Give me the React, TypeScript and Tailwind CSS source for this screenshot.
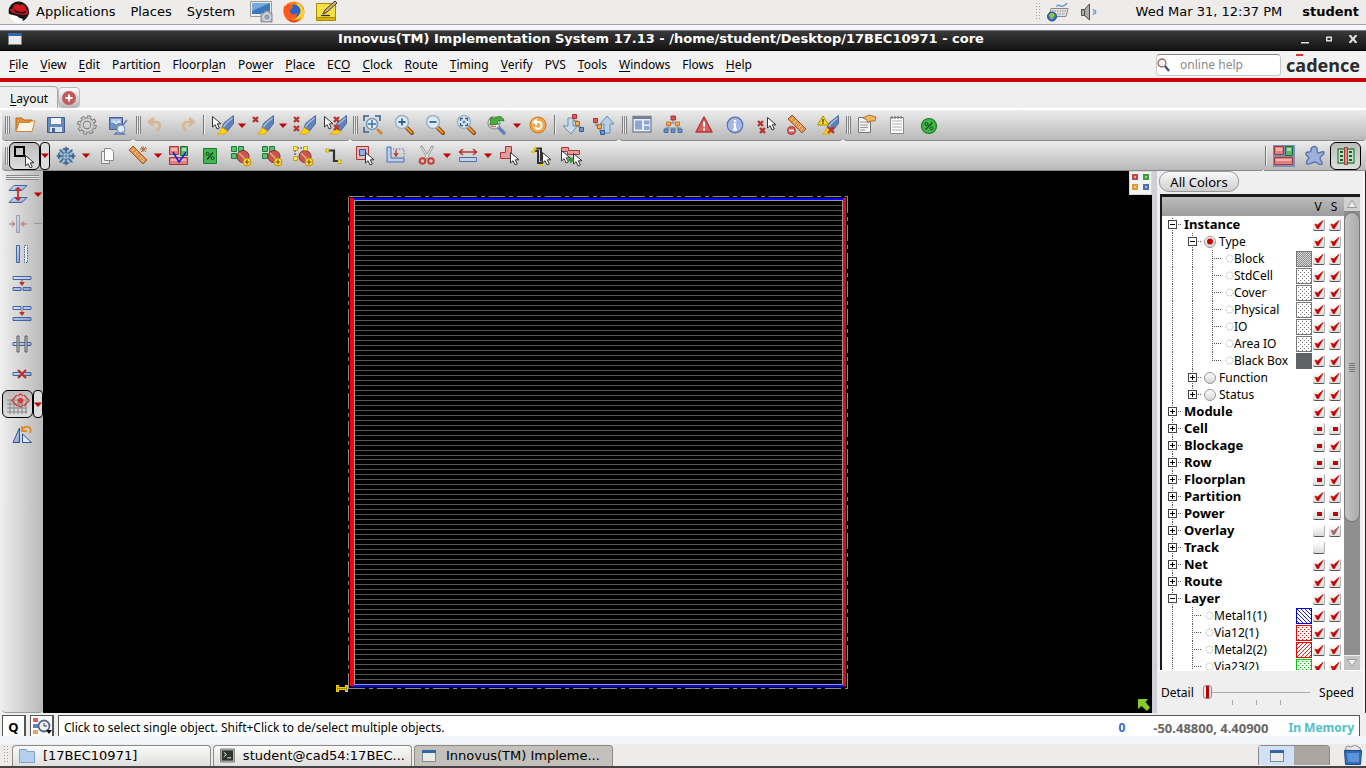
import React from "react";

type Kids = { children?: React.ReactNode };

/* ---------- drawing motifs ---------- */

const Ico = ({ children }: Kids) => (
  <svg width="24" height="24" viewBox="0 0 24 24" className="shrink-0" aria-hidden="true">
    {children}
  </svg>
);

const Cursor = ({ x = 0, y = 0 }: { x?: number; y?: number }) => (
  <path
    transform={`translate(${x} ${y})`}
    d="M.5 .5V11l2.600-2.300 2 4.300 2.200-1-2-4.200H9z"
    fill="#fff"
    stroke="#333"
    strokeWidth="1"
  />
);

const Cross = ({ x, y, s = 5 }: { x: number; y: number; s?: number }) => (
  <path
    transform={`translate(${x} ${y})`}
    d={`M0 0L${s} ${s}M${s} 0L0 ${s}`}
    stroke="#b5362f"
    strokeWidth="2.400"
    fill="none"
  />
);

const Brush = ({ x = 0, y = 0 }: { x?: number; y?: number }) => (
  <g transform={`translate(${x} ${y})`}>
    <path d="M15.500 -1.500V6.500L9.500 14 4 10.500 6 6z" fill="#5f83b8" stroke="#3d5a8a" strokeWidth=".8" />
    <path d="M14.500 1L8 6.500 5.500 10" stroke="#a9c0e2" strokeWidth="1.400" fill="none" />
    <path d="M4 10.500l5.500 3.500L7 17H-.5c2-1 3-3 4.500-6.500z" fill="#ffd800" stroke="#d99a00" strokeWidth=".7" />
  </g>
);

const Lens = ({ children }: Kids) => (
  <>
    <path d="M14 14l6 6" stroke="#8a4a12" strokeWidth="4" strokeLinecap="round" />
    <path d="M14.500 14.500l5 5" stroke="#f0982e" strokeWidth="2" strokeLinecap="round" />
    <circle cx="10" cy="9" r="6.500" fill="#dceaf5" stroke="#9fb2c2" strokeWidth="1.500" />
    {children}
  </>
);

const PlusBadge = () => (
  <>
    <circle cx="18" cy="18" r="4" fill="#ffe04a" stroke="#c78b00" />
    <path d="M18 15.500v5M15.500 18h5" stroke="#7a5200" strokeWidth="1.200" />
  </>
);

const Stop = () => (
  <>
    <circle cx="14" cy="12.500" r="6" fill="#c9584a" stroke="#8f2c25" />
    <path d="M10 9l8 8" stroke="#f0a59c" strokeWidth="1.500" />
  </>
);

const GreenQuad = () => (
  <g fill="#5cc070" stroke="#1f7a36">
    <path d="M2.500 2.500h5v5h-5zM9.500 2.500h5v5h-5zM2.500 9.500h5v5h-5zM9.500 9.500h5v5h-5z" />
  </g>
);

const Ruler = () => (
  <>
    <path d="M7 2l14 14-4 4L3 6z" fill="#e0924f" stroke="#a85a1d" />
    <path d="M8 5l-2 2M11 7l-2 3M13 10l-2 2M16 12l-2 3M18 15l-2 2" stroke="#fbd9b4" />
  </>
);

const Tiles = () => (
  <>
    <path d="M2.500 2.500h9v8h-9zM2.500 13.500h18v7h-18z" fill="#e2807f" stroke="#a33a3a" />
    <path d="M4 4h6v3H4zM4 15h15v2H4z" fill="#f1b3b0" />
    <path d="M13.500 2.500h7v9h-7z" fill="#5cb26c" stroke="#1f6b33" />
    <path d="M15 4h4v3h-4z" fill="#a9dcb2" />
  </>
);

const G = "url(#blueGrad)";

const icons: Record<string, React.ReactNode> = {
  open: (
    <>
      <path d="M3 18V5h6l2 2h8v4" fill="#e5913c" stroke="#b56618" />
      <path d="M3 18.500l3-9h11l1-1.500h4l-3 10.500z" fill="#fdf3e4" stroke="#c98544" />
    </>
  ),
  save: (
    <>
      <path d="M3.500 4.500h17v15h-17z" fill="#6688bd" stroke="#3e5c90" />
      <path d="M7 5h10v6H7z" fill="#f2f5fa" />
      <path d="M6 14h12v5H6z" fill="#dce2ea" />
      <path d="M8 15h3v4H8z" fill="#4a6694" />
    </>
  ),
  gear: (
    <>
      <circle cx="12" cy="12" r="8" fill="none" stroke="#777" strokeWidth="3.600" strokeDasharray="3.600 2.683" />
      <circle cx="12" cy="12" r="5.500" fill="none" stroke="#777" strokeWidth="4.400" />
      <circle cx="12" cy="12" r="5.500" fill="none" stroke="#cfcfcf" strokeWidth="2.600" />
      <circle cx="12" cy="12" r="7.800" fill="none" stroke="#cfcfcf" strokeWidth="2" strokeDasharray="2.200 3.926" strokeDashoffset="-.7" />
    </>
  ),
  prefs: (
    <>
      <path d="M3.500 4.500h13v12h-13z" fill="#6f91c4" stroke="#45659a" />
      <path d="M5 6h10v4H5z" fill="#b7cbe8" />
      <path d="M7 8l3 3 4-3" stroke="#fff" fill="none" />
      <circle cx="15" cy="16" r="4" fill="#dbe9f7" stroke="#6f8dae" />
      <path d="M17 12l4-5M11 19l-2 2h9l-2-2" stroke="#5f7fae" strokeWidth="1.500" fill="none" />
    </>
  ),
  undo: <path d="M10 5L5 9l5 4M6 9h6c5 0 5 6 0 9" fill="none" stroke="#d9b694" strokeWidth="2.600" />,
  redo: <path d="M14 5l5 4-5 4M18 9h-6c-5 0-5 6 0 9" fill="none" stroke="#d9b694" strokeWidth="2.600" />,
  brushSel: (
    <>
      <Brush x={8} y={4} />
      <Cursor x={2} y={3} />
    </>
  ),
  brushX: (
    <>
      <Brush x={7} y={4} />
      <Cross x={2} y={4} />
    </>
  ),
  brushXX: (
    <>
      <Brush x={8} y={4} />
      <Cross x={2} y={4} />
      <Cross x={2} y={13} />
    </>
  ),
  brushCurX: (
    <>
      <Brush x={8} y={4} />
      <Cursor x={1} y={3} />
      <Cross x={11} y={4} />
      <Cross x={11} y={12} />
    </>
  ),
  zoomFit: (
    <>
      <path d="M3 8V3h5M14 3h5v5M3 14v5h5" stroke="#5a7da0" strokeWidth="2" fill="none" />
      <circle cx="11" cy="11" r="5.500" fill="#e3eef7" stroke="#6f93b5" strokeWidth="1.400" />
      <path d="M11 7v8M7 11h8" stroke="#3f6f9f" strokeWidth="1.500" />
      <path d="M16 16l5 5" stroke="#d08434" strokeWidth="2.600" />
    </>
  ),
  zoomIn: (
    <Lens>
      <path d="M10 5.500v7M6.500 9h7" stroke="#39638f" strokeWidth="1.800" />
    </Lens>
  ),
  zoomOut: (
    <Lens>
      <path d="M6.500 9h7" stroke="#39638f" strokeWidth="1.800" />
    </Lens>
  ),
  zoomSel: (
    <Lens>
      <path d="M6.500 8V5.500H9M11 5.500h2.500V8M13.500 10v2.500H11M9 12.500H6.500V10" stroke="#39638f" strokeWidth="1.300" fill="none" />
      <path d="M10 7.500v3M8.500 9h3" stroke="#39638f" />
    </Lens>
  ),
  zoomPrev: (
    <>
      <path d="M13 14l6 6" stroke="#5f80b8" strokeWidth="3.400" strokeLinecap="round" />
      <circle cx="9" cy="10" r="6" fill="#e7eef4" stroke="#999" strokeWidth="1.400" />
      <path d="M5 12l1-8 3 2c4-4 9-3 10 2-3-1-5-1-7 1l2 2z" fill="#4caf3a" stroke="#25701b" strokeWidth=".8" />
      <path d="M6 13.500h5" stroke="#d66" strokeWidth="1.500" />
    </>
  ),
  refresh: (
    <>
      <circle cx="12" cy="12" r="8" fill="#f3a94b" stroke="#c9761b" />
      <path d="M9 9h4a3.500 3.500 0 1 1-4 5" fill="none" stroke="#fff" strokeWidth="2.200" />
      <path d="M11 5v8L6 9z" fill="#fff" />
    </>
  ),
  hierDown: (
    <>
      <path d="M7 5h5v8h4l-6 8-8-8h5z" fill="#c9dbea" stroke="#6e90ae" />
      <path d="M13 4v4h4v6h3" stroke="#777" fill="none" />
      <path d="M11.500 1.500h4v4h-4z" fill="#e05a5a" stroke="#a33" />
      <path d="M14.500 8.500h4v4h-4z" fill="#f3b05c" stroke="#b56618" />
      <path d="M18.500 14.500h4v4h-4z" fill="#6d93c8" stroke="#345f96" />
    </>
  ),
  hierUp: (
    <>
      <path d="M12 20v-9H8l7-8 7 8h-4v9z" fill="#b9d0e4" stroke="#6e90ae" />
      <path d="M4 8v5h4v6h3" stroke="#777" fill="none" />
      <path d="M1.500 5.500h4v4h-4z" fill="#e05a5a" stroke="#a33" />
      <path d="M5.500 11.500h4v4h-4z" fill="#f3b05c" stroke="#b56618" />
      <path d="M8.500 17.500h4v4h-4z" fill="#6d93c8" stroke="#345f96" />
    </>
  ),
  panels: (
    <>
      <path d="M3 3.500h18v15.500H3z" fill="#e9edf5" stroke="#7d8796" strokeWidth="1.400" />
      <path d="M3 3h18v3H3z" fill="#76808f" />
      <path d="M5 7.500h7v9H5zM14 7.500h5.500v4H14zM14 13h5.500v4H14z" fill="#8ba6d8" />
    </>
  ),
  orgTree: (
    <>
      <path d="M12 6v4M7 10h10M7 10v8M17 10v8M4 15h16" stroke="#888" fill="none" />
      <path d="M10 3h4.500v4H10z" fill="#d9534f" stroke="#922" strokeWidth=".8" />
      <path d="M5.500 9h4v3.500h-4zM14.500 9h4v3.500h-4z" fill="#f3b05c" stroke="#b56618" strokeWidth=".8" />
      <path d="M3 16h4v3.500H3zM10 16h4v3.500h-4zM17 16h4v3.500h-4z" fill="#6d93c8" stroke="#345f96" strokeWidth=".8" />
    </>
  ),
  warn: (
    <>
      <path d="M12 4l8 15H4z" fill="#d9605c" stroke="#b23a37" strokeWidth="1.500" strokeLinejoin="round" />
      <path d="M12 8.500v5.500M12 15.500v2" stroke="#fff" strokeWidth="2" />
    </>
  ),
  info: (
    <>
      <circle cx="12" cy="12" r="7.800" fill="#a8b8e6" stroke="#5b70b0" strokeWidth="1.200" />
      <path d="M12 7v2M10.500 11H12v5M10 16.500h4" stroke="#fff" strokeWidth="2.200" fill="none" />
    </>
  ),
  curXX: (
    <>
      <Cross x={4} y={8} />
      <Cross x={6} y={15} />
      <Cursor x={13} y={4} />
    </>
  ),
  rulerDel: (
    <>
      <Ruler />
      <circle cx="6.500" cy="17.500" r="4" fill="#d9605c" stroke="#a5332f" />
      <path d="M4 17.500h5" stroke="#fff" strokeWidth="1.600" />
    </>
  ),
  warnBrush: (
    <>
      <Brush x={7} y={4} />
      <path d="M7 3l5.500 9h-11z" fill="#ffe100" stroke="#b08800" />
      <path d="M7 6v3.500M7 10v1" stroke="#333" strokeWidth="1.300" />
      <Cross x={12} y={14} s={6} />
    </>
  ),
  report: (
    <>
      <path d="M4.500 4.500h12v15h-12z" fill="#f2f2f2" stroke="#777" />
      <path d="M6 9h8M6 12h8M6 14.500h8M6 17h5" stroke="#999" />
      <path d="M9 5l6-3 7 2-1 4h-5l-2 2-1-3z" fill="#f0b866" stroke="#a86c1e" strokeWidth=".9" />
    </>
  ),
  notepad: (
    <>
      <path d="M5.500 4.500h13v16h-13z" fill="#fff" stroke="#888" />
      <path d="M7 8h10M7 11h10M7 14h10M7 17h10" stroke="#aaa" />
      <path d="M7 3v3M10 3v3M13 3v3M16 3v3" stroke="#666" />
    </>
  ),
  percentBall: (
    <>
      <circle cx="13" cy="13" r="7.500" fill="#42b549" stroke="#1e7a28" strokeWidth="1.200" />
      <path d="M16.500 9.500l-7 7" stroke="#0e4d17" strokeWidth="1.400" />
      <circle cx="10.500" cy="11" r="1.500" fill="none" stroke="#0e4d17" />
      <circle cx="15.500" cy="15.500" r="1.500" fill="none" stroke="#0e4d17" />
    </>
  ),
  select: (
    <>
      <path d="M2 3h9v9H2z" fill="none" stroke="#000" strokeWidth="2" />
      <Cursor x={12} y={11} />
    </>
  ),
  snow: (
    <>
      <circle cx="12" cy="12" r="7.500" fill="#9dbbd6" stroke="#54789c" strokeWidth="1" strokeDasharray="3 2" />
      <path
        d="M12 2.500v19M2.500 12h19M5.500 5.500l13 13M18.500 5.500l-13 13M9.500 4L12 6.500 14.500 4M9.500 20l2.500-2.500 2.500 2.500M4 9.500L6.500 12 4 14.500M20 9.500L17.500 12l2.500 2.500"
        stroke="#3f6488"
        strokeWidth="1.300"
        fill="none"
      />
      <circle cx="12" cy="12" r="3.500" fill="#c3d8ea" stroke="#4d7398" />
      <path d="M12 9v6M9 12h6" stroke="#4d7398" />
    </>
  ),
  copy: (
    <>
      <path d="M6.500 7.500h8v12h-8z" fill="#eee" stroke="#888" />
      <path d="M9.500 4.500h6l3 3v9h-9z" fill="#fafafa" stroke="#888" />
    </>
  ),
  ruler: (
    <>
      <Ruler />
      <path d="M17 2v6M14 5h7M15 3l5 5M20 3l-5 5" stroke="#a85a1d" strokeWidth=".9" />
    </>
  ),
  tilesV: (
    <>
      <Tiles />
      <path d="M6 8l6 10 7-10" fill="none" stroke="#1420d8" strokeWidth="1.500" />
    </>
  ),
  percent: (
    <>
      <path d="M5.500 4.500h13v15h-13z" fill="#45b554" stroke="#1f7a2c" />
      <path d="M15 8.500l-6 7" stroke="#0c4415" strokeWidth="1.300" />
      <circle cx="9.500" cy="9.800" r="1.500" fill="none" stroke="#0c4415" />
      <circle cx="14.500" cy="14.200" r="1.500" fill="none" stroke="#0c4415" />
    </>
  ),
  blockAdd: (
    <>
      <GreenQuad />
      <Stop />
      <PlusBadge />
    </>
  ),
  nodeAdd: (
    <>
      <path d="M4 14V4h10" fill="none" stroke="#333" strokeDasharray="2 1" />
      <Stop />
      <path d="M2.500 2.500h4v4h-4zM12.500 2.500h4v4h-4zM2.500 12.500h4v4h-4z" fill="#ffe94a" stroke="#a89400" strokeWidth=".7" />
      <PlusBadge />
    </>
  ),
  wire: (
    <>
      <path d="M5 6.500h7V17h6" fill="none" stroke="#333" strokeWidth="2.200" />
      <path d="M4 5h3v3H4zM16 16h3v3.500h-3z" fill="#ffe94a" stroke="#a89400" strokeWidth=".7" />
    </>
  ),
  boxCursor: (
    <>
      <path d="M3.500 2.500h12v13h-12z" fill="#efb6b4" stroke="#a33a3a" />
      <path d="M6.500 5.500h6v6h-6z" fill="#8fb0e0" stroke="#2e5596" />
      <Cursor x={12} y={8} />
    </>
  ),
  shapeL: (
    <>
      <path d="M3 3v15h17v-4H7V3z" fill="#b9cdec" stroke="#4d6fa6" />
      <path d="M9 5h11v8" fill="none" stroke="#4d6fa6" strokeDasharray="1.500 1.500" />
      <path d="M12 6v5M10 9l2 3 2-3" stroke="#b5362f" strokeWidth="1.300" fill="none" />
    </>
  ),
  cut: (
    <>
      <path d="M6 2l8 13M18 2l-8 13" stroke="#9a9a9a" strokeWidth="2.600" />
      <path d="M6.500 3l7 11M17.500 3l-7 11" stroke="#f1f1f1" strokeWidth="1" />
      <circle cx="7.500" cy="17" r="2.800" fill="none" stroke="#c8402f" strokeWidth="2" />
      <circle cx="16" cy="17" r="2.800" fill="none" stroke="#c8402f" strokeWidth="2" />
    </>
  ),
  stretch: (
    <>
      <path d="M4 8h16M7 5L3.500 8 7 11M17 5l3.500 3-3.500 3" stroke="#b5362f" strokeWidth="1.500" fill="none" />
      <path d="M3.500 13.500h17v4h-17z" fill="#c1d2ee" stroke="#4d6fa6" />
    </>
  ),
  polyCursor: (
    <>
      <path d="M8.500 2.500h6v12h-11v-6h5z" fill="#e79a96" stroke="#a33a3a" />
      <Cursor x={13} y={8} />
    </>
  ),
  wireCursor: (
    <>
      <path d="M6 7h4v12h5M8 4.500h5v12h3" fill="none" stroke="#333" strokeWidth="2" />
      <path d="M3 8h4M8 3l-2 4" stroke="#e2c600" strokeWidth="2.200" fill="none" />
      <path d="M11 21h4" stroke="#e2c600" strokeWidth="2" />
      <Cursor x={14} y={8} />
    </>
  ),
  swapCursor: (
    <>
      <path d="M2.500 3.500h7v3h11v4h-12v-3h-6z" fill="#e79a96" stroke="#a33a3a" />
      <Cursor x={2} y={6} />
      <Cursor x={14} y={9} />
      <path d="M8 16h5M11 13.500l3 2.500-3 2.500" stroke="#2e9b2e" strokeWidth="1.800" fill="none" />
    </>
  ),
  tiles: (
    <>
      <path d="M1 1h22v22H1z" fill="#7a8fb8" />
      <Tiles />
    </>
  ),
  amoeba: (
    <path
      d="M8 7c-1-4 4-6 6-3 1 2-1 4 1 5 2 0 4-2 6-1 1 3-3 3-4 6 0 3 3 4 2 6-3 2-4-2-7-2-3 0-5 3-8 2-2-2 1-4 2-6 0-2-4-2-3-5 2-2 4 0 5-2z"
      fill="#9db1dc"
      stroke="#5672ab"
      strokeWidth="1.300"
    />
  ),
  chip: (
    <>
      <path d="M4 5h7v14H4zM13 5h7v14h-7z" fill="#bfe3c4" stroke="#2f8a43" strokeWidth="1.300" />
      <path d="M6 8h3M6 12h3M6 16h3M15 8h3M15 12h3M15 16h3" stroke="#1f5c30" strokeWidth="2" />
      <path d="M10.500 3.500h3v17h-3z" fill="#e98c84" stroke="#a33a3a" />
    </>
  ),
  layers: (
    <>
      <path d="M8 3.500h13l-5 5H3z" fill={G} stroke="#4562a0" />
      <path d="M8 15.500h13l-5 5H3z" fill={G} stroke="#4562a0" />
      <path d="M12 6v12M9.500 8.500L12 6l2.500 2.500M9.500 15.500L12 18l2.500-2.500" stroke="#c0302b" strokeWidth="1.800" fill="none" />
    </>
  ),
  align: (
    <g opacity=".45">
      <path d="M10.500 3.500h3v17h-3z" fill={G} stroke="#4562a0" />
      <path d="M3 12h5M6 9.500L8.500 12 6 14.500M21 12h-5M18 9.500L15.500 12l2.500 2.500" stroke="#b5362f" strokeWidth="1.500" fill="none" />
    </g>
  ),
  columns: (
    <>
      <path d="M6.500 3.500h3v17h-3z" fill={G} stroke="#4562a0" />
      <path d="M14.500 3.500h3v17h-3z" fill="#eef2fa" stroke="#4562a0" strokeDasharray="1.500 1" />
    </>
  ),
  rowDown: (
    <>
      <path d="M3 4.500h18v3H3zM3 15.500h8v3H3zM13 15.500h8v3h-8z" fill={G} stroke="#4562a0" />
      <path d="M12 8v4M9.800 10.500h4.400L12 13.500z" stroke="#b5362f" fill="#b5362f" />
    </>
  ),
  rowMerge: (
    <>
      <path d="M3 4.500h8v3H3zM13 4.500h8v3h-8zM3 15.500h18v3H3z" fill={G} stroke="#4562a0" />
      <path d="M12 8v4M9.800 10.500h4.400L12 13.500z" stroke="#b5362f" fill="#b5362f" />
    </>
  ),
  fence: (
    <>
      <path d="M3 10.500h18v3H3z" fill={G} stroke="#4562a0" />
      <path d="M7 4h2v16H7zM15 4h2v16h-2z" fill="#d6d6d6" stroke="#555" />
    </>
  ),
  rowCut: (
    <>
      <path d="M3 10.500h18v3H3z" fill={G} stroke="#4562a0" />
      <Cross x={8} y={8} s={8} />
    </>
  ),
  gridPick: (
    <>
      <path d="M4 8v14M8 8v14M12 8v14M16 8v14M20 8v14M1 8h20M1 12h20M1 16h20M1 20h20" stroke="#888" />
      <path d="M11 3L6 8.500l5 5.500M18 3l5 5.500-5 5.500M12 4l2.500-2L17 4M12 13l2.500 2 2.500-2" stroke="#c94b46" strokeWidth="1.600" fill="none" />
      <circle cx="14.500" cy="8.500" r="2.800" fill="#dc3c38" />
    </>
  ),
  mirror: (
    <>
      <path d="M3 20.500L9.500 6v14.500z" fill={G} stroke="#33508e" />
      <path d="M12.500 20.500V12l9 8.500z" fill="#dfe8f6" stroke="#33508e" />
      <path d="M13 7l2-2c4-1 7 1 5 6M12 4v5h5" fill="none" stroke="#e08d2c" strokeWidth="2" />
    </>
  ),
};

/* ---------- toolbar parts ---------- */

type Item = string;

const Tool = ({ name, pressed = false }: { name: string; pressed?: boolean }) => (
  <button
    type="button"
    aria-label={name}
    className={
      pressed
        ? "flex h-7 w-[31px] shrink-0 items-center justify-center rounded-md border border-black bg-gradient-to-b from-[#bdbdbd] to-[#dedede]"
        : "flex h-7 w-[31px] shrink-0 items-center justify-center"
    }
  >
    <Ico>{icons[name]}</Ico>
  </button>
);

const Drop = ({ pressed = false, faded = false }: { pressed?: boolean; faded?: boolean }) => (
  <button
    type="button"
    aria-label="More"
    className={
      pressed
        ? "flex h-7 w-[10px] shrink-0 items-center justify-center rounded-[4px] border border-black bg-[#dcdcdc]"
        : "flex h-7 w-[10px] shrink-0 items-center justify-center"
    }
  >
    <svg width="8" height="5" viewBox="0 0 8 5" className="shrink-0" aria-hidden="true">
      {faded ? <path d="M0 1.500h8" stroke="#999" /> : <path d="M0 .5h8L4 5z" fill="#c00000" />}
    </svg>
  </button>
);

const renderItem = (it: Item, i: number) => {
  if (it === "|") return <span key={i} className="mx-px h-5 w-[2px] shrink-0 border-l border-[#777] bg-[#eee]" />;
  if (it === "v") return <Drop key={i} />;
  if (it === "V") return <Drop key={i} pressed />;
  if (it.startsWith("!")) return <Tool key={i} name={it.slice(1)} pressed />;
  return <Tool key={i} name={it} />;
};

const Group = ({ items, grow = false }: { items: Item[]; grow?: boolean }) => (
  <div
    className={
      grow
        ? "flex flex-1 items-center rounded-b-sm border-b border-[#8a8a8a] bg-gradient-to-b from-[#ececec] to-[#b9b9b9]"
        : "flex items-center rounded-b-sm border-b border-[#8a8a8a] bg-gradient-to-b from-[#ececec] to-[#b9b9b9]"
    }
  >
    <span className="flex h-[18px] w-[7px] shrink-0 items-center pl-[3px]">
      <span className="h-[18px] w-[5px] shrink-0 border-x border-[#808080] bg-[linear-gradient(90deg,#e8e8e8_1px,#888_1px,#888_2px,#e8e8e8_2px)]" />
    </span>
    {items.map(renderItem)}
  </div>
);

/* ---------- menu ---------- */

const menus: [string, number][] = [
  ["File", 0], ["View", 0], ["Edit", 0], ["Partition", 8], ["Floorplan", 7], ["Power", 2], ["Place", 0],
  ["ECO", 2], ["Clock", 0], ["Route", 0], ["Timing", 0], ["Verify", 0], ["PVS", -1], ["Tools", 0],
  ["Windows", 0], ["Flows", -1], ["Help", 0],
];

const Mnemonic = ({ text, at }: { text: string; at: number }) =>
  at < 0 ? (
    <>{text}</>
  ) : (
    <>
      {text.slice(0, at)}
      <u className="underline-offset-2">{text[at]}</u>
      {text.slice(at + 1)}
    </>
  );

/* ---------- layer tree ---------- */

type Mark = "on" | "part" | "off" | "dim" | "none";
type Row = {
  name: string;
  level: 0 | 1 | 2;
  fold?: "+" | "-";
  radio?: "on" | "off" | "tiny";
  swatch?: string;
  v: Mark;
  s: Mark;
  rails: string;
};

/* rails: one letter per tree column; I = through line, L = last corner, T = branch */
const rows: Row[] = [
  { name: "Instance", level: 0, fold: "-", v: "on", s: "on", rails: "" },
  { name: "Type", level: 1, fold: "-", radio: "on", v: "on", s: "on", rails: "I" },
  ...["Block", "StdCell", "Cover", "Physical", "IO", "Area IO", "Black Box"].map((name, i): Row => ({
    name,
    level: 2,
    radio: "tiny",
    swatch: i === 0 ? "dense" : i === 6 ? "solid" : "dots",
    v: "on",
    s: "on",
    rails: i === 6 ? "IIL" : "IIT",
  })),
  { name: "Function", level: 1, fold: "+", radio: "off", v: "on", s: "on", rails: "I" },
  { name: "Status", level: 1, fold: "+", radio: "off", v: "on", s: "on", rails: "I" },
  ...(
    [
      ["Module", "on", "on"],
      ["Cell", "part", "part"],
      ["Blockage", "part", "on"],
      ["Row", "part", "part"],
      ["Floorplan", "part", "on"],
      ["Partition", "on", "on"],
      ["Power", "part", "part"],
      ["Overlay", "off", "dim"],
      ["Track", "off", "none"],
      ["Net", "on", "on"],
      ["Route", "on", "on"],
    ] as [string, Mark, Mark][]
  ).map(([name, v, s]): Row => ({ name, level: 0, fold: "+", v, s, rails: "" })),
  { name: "Layer", level: 0, fold: "-", v: "on", s: "on", rails: "" },
  { name: "Metal1(1)", level: 1, radio: "tiny", swatch: "blue", v: "on", s: "on", rails: "IT" },
  { name: "Via12(1)", level: 1, radio: "tiny", swatch: "redDots", v: "on", s: "on", rails: "IT" },
  { name: "Metal2(2)", level: 1, radio: "tiny", swatch: "red", v: "on", s: "on", rails: "IT" },
  { name: "Via23(2)", level: 1, radio: "tiny", swatch: "greenDots", v: "on", s: "on", rails: "IT" },
];

const Rails = ({ row, first }: { row: Row; first: boolean }) => {
  const w = 20 * row.level + 20;
  const cx = 20 * row.level + 10.5;
  const dash = { stroke: "#555", strokeDasharray: "1 1", fill: "none" };
  return (
    <svg width={w} height="17" viewBox={`0 0 ${w} 17`} className="shrink-0" aria-hidden="true">
      {row.rails.split("").map((r, i) => {
        const x = 20 * i + 10.5;
        if (r === "I") return <path key={i} d={`M${x} 0V17`} {...dash} />;
        return <path key={i} d={`M${x} 0V${r === "L" ? 9 : 17}M${x + 1.5} 8.500h8`} {...dash} />;
      })}
      {row.fold && (
        <>
          <path d={`M${cx} ${first ? 2 : 0}V${row.level === 1 && row.name === "Status" ? 9 : 17}M${cx + 5.5} 8.500h4`} {...dash} />
          <rect x={cx - 4} y="4.500" width="8" height="8" fill="#fff" stroke="#444" />
          <path d={`M${cx - 2.5} 8.500h5${row.fold === "+" ? `M${cx} 6v5` : ""}`} stroke="#000" />
        </>
      )}
    </svg>
  );
};

const Radio = ({ kind }: { kind: "on" | "off" | "tiny" }) =>
  kind === "tiny" ? (
    <svg width="9" height="9" viewBox="0 0 9 9" className="shrink-0" aria-hidden="true">
      <circle cx="4.500" cy="4.500" r="3.500" fill="#fff" stroke="#bbb" strokeDasharray="2 1" />
    </svg>
  ) : (
    <svg width="14" height="14" viewBox="0 0 14 14" className="ml-px shrink-0" aria-hidden="true">
      <circle cx="7" cy="7" r="5.500" fill="url(#ballGrad)" stroke="#999" />
      {kind === "on" && <circle cx="7" cy="6.500" r="3" fill="#c80000" />}
    </svg>
  );

const Swatch = ({ kind }: { kind: string }) => {
  const fills: Record<string, [string, string]> = {
    dense: ["url(#pDense)", "#777"],
    dots: ["url(#pDots)", "#777"],
    solid: ["#5f6363", "#5f6363"],
    blue: ["url(#pBlue)", "#0000d8"],
    redDots: ["url(#pRedDots)", "#f00000"],
    red: ["url(#pRed)", "#f00000"],
    greenDots: ["url(#pGreenDots)", "#00c800"],
  };
  const [fill, stroke] = fills[kind];
  return (
    <svg width="16" height="16" viewBox="0 0 16 16" className="block" aria-hidden="true">
      <rect x=".5" y=".5" width="15" height="15" fill={fill} stroke={stroke} />
    </svg>
  );
};

const Tick = ({ mark, label }: { mark: Mark; label: string }) => {
  if (mark === "none") return null;
  const ink = mark === "on" ? "#c80000" : "#a86464";
  return (
    <span className="grid size-3">
      <input
        type="checkbox"
        aria-label={label}
        defaultChecked={mark === "on" || mark === "dim"}
        className="col-start-1 row-start-1 size-3 appearance-none rounded-[2px] border-r border-b border-r-[#b0b0b0] border-b-[#555] bg-gradient-to-b from-white to-[#dcdcdc]"
      />
      <svg width="12" height="12" viewBox="0 0 12 12" className="pointer-events-none col-start-1 row-start-1" aria-hidden="true">
        {(mark === "on" || mark === "dim") && (
          <path d="M2 5l2.500 1L10 1.500 5.500 9.500H4z" fill={ink} stroke={ink} strokeWidth=".7" />
        )}
        {mark === "part" && <rect x="4" y="4" width="5" height="4" fill="#c80000" />}
      </svg>
    </span>
  );
};

const Defs = () => (
  <svg width="0" height="0" className="absolute" aria-hidden="true">
    <defs>
      <linearGradient id="blueGrad" x1="0" y1="0" x2="1" y2="1">
        <stop offset="0" stopColor="#dfe9f8" />
        <stop offset="1" stopColor="#7f9cd0" />
      </linearGradient>
      <linearGradient id="ballGrad" x1="0" y1="0" x2="0" y2="1">
        <stop offset="0" stopColor="#fff" />
        <stop offset="1" stopColor="#d4d4d4" />
      </linearGradient>
      <pattern id="pDense" width="2" height="2" patternUnits="userSpaceOnUse">
        <rect width="2" height="2" fill="#ddd" />
        <path d="M0 0h1v1H0zM1 1h1v1H1z" fill="#888" />
      </pattern>
      <pattern id="pDots" width="4" height="4" patternUnits="userSpaceOnUse">
        <rect width="4" height="4" fill="#fff" />
        <path d="M0 0h1v1H0zM2 2h1v1H2z" fill="#777" />
      </pattern>
      <pattern id="pRedDots" width="4" height="4" patternUnits="userSpaceOnUse">
        <rect width="4" height="4" fill="#fff" />
        <path d="M0 0h1v1H0zM2 2h1v1H2z" fill="#f00" />
      </pattern>
      <pattern id="pGreenDots" width="4" height="4" patternUnits="userSpaceOnUse">
        <rect width="4" height="4" fill="#fff" />
        <path d="M0 0h1v1H0zM2 2h1v1H2z" fill="#00c800" />
      </pattern>
      <pattern id="pBlue" width="4" height="4" patternUnits="userSpaceOnUse">
        <rect width="4" height="4" fill="#fff" />
        <path d="M-1 -1L5 5M-1 3l2 2M3 -1l2 2" stroke="#0000e0" strokeWidth=".9" />
      </pattern>
      <pattern id="pRed" width="4" height="4" patternUnits="userSpaceOnUse">
        <rect width="4" height="4" fill="#fff" />
        <path d="M-1 5L5 -1M-1 1l2 -2M3 5l2 -2" stroke="#c81010" strokeWidth=".9" />
      </pattern>
    </defs>
  </svg>
);

const CorePlan = () => (
  <svg width="524" height="500" viewBox="336 192 524 500" className="shrink-0" shapeRendering="crispEdges" role="img" aria-label="Core floorplan">
    {Array.from({ length: 96 }, (_, i) => (
      <rect key={i} x="355" y={Math.round(205 + i * 4.99)} width="488" height="1" fill="#555" />
    ))}
    <path d="M348.500 196.500h499M348.500 688.500h499" stroke="#8a8a8a" strokeDasharray="16 4 4 4" />
    <path d="M348.500 196.500v492M847.500 196.500v492" stroke="#8a8a8a" strokeDasharray="16 4 4 4" />
    <rect x="354.500" y="200.500" width="488" height="484" fill="none" stroke="#999" />
    <rect x="352" y="198" width="492" height="2" fill="#0000ff" />
    <rect x="352" y="685" width="492" height="2" fill="#0000ff" />
    <rect x="350" y="198" width="4" height="488" fill="#ff0000" />
    <rect x="843" y="198" width="3" height="488" fill="#ff0000" />
    <path d="M336.500 685.500h2v2h7v-2h2v6h-2v-2h-7v2h-2z" fill="#a88a00" stroke="#f5d000" />
  </svg>
);

const MiniWindow = () => (
  <svg width="14" height="12" viewBox="0 0 14 12" className="shrink-0" aria-hidden="true">
    <path d="M.5 .5h13v11H.5z" fill="#e8ebe8" stroke="#7d8790" />
    <path d="M0 0h14v3H0z" fill="#3465a4" />
  </svg>
);

const DotGrip = () => (
  <svg width="5" height="18" viewBox="0 0 5 18" className="shrink-0" aria-hidden="true">
    <path d="M.5 0V18M3.500 0V18" stroke="#a5a09b" strokeDasharray="1 2" />
  </svg>
);

const sideTools: [string, string][] = [
  ["layers", "v"], ["align", "-"], ["columns", ""], ["rowDown", ""], ["rowMerge", ""],
  ["fence", ""], ["rowCut", ""], ["!gridPick", "V"], ["mirror", ""],
];

export default function App() {
  return (
    <div className="flex h-screen flex-col overflow-hidden bg-[#efefef] font-['Noto_Sans','Open_Sans',sans-serif] text-xs text-black">
      <Defs />

      {/* desktop panel */}
      <header className="flex h-[25px] shrink-0 items-center border-b border-[#a8a09a] bg-[#edeceb] pr-[7px] pb-px pl-2 font-['DejaVu_Sans',sans-serif] text-[13px]">
        <svg width="22" height="22" viewBox="0 0 22 22" aria-hidden="true">
          <circle cx="11" cy="11" r="10.500" fill="#fff" />
          <path d="M1 13C-1 6 5 0 11 .5S22 6 21 13c-2 4-4 6-6 7l-6-5z" fill="#161616" />
          <path d="M5 8c0-4 3-6 5-4.500s3 0 5 0 3 4 4 6c2 1 2 4-1 4-5 1-14-1-16-4 0-2 2-2 3-1.500z" fill="#d3161d" />
          <path d="M6 9c3 3 8 3 12 2" stroke="#111" strokeWidth="1.500" fill="none" />
          <path d="M2 14c3 1 5 1 7 3 2 0 4 0 6 1-1 3-3 3.500-5 3.500S3 19 2 14z" fill="#fff" />
        </svg>
        <nav className="ml-[6px] flex gap-[15px]">
          <button type="button">Applications</button>
          <button type="button">Places</button>
          <button type="button">System</button>
        </nav>
        <div className="ml-[14px] flex gap-[10px]">
          <button type="button" aria-label="Screenshot">
            <svg width="24" height="24" viewBox="0 0 24 24" aria-hidden="true">
              <path d="M1.500 1.500h21v15h-21z" fill="#eee" stroke="#999" />
              <path d="M3 3h18v11H3z" fill="#3c78c0" />
              <path d="M3 3h18L3 11z" fill="#79a8dc" />
              <path d="M12 13h3l1-2h4l1 2h2v9H12z" fill="#b9bcc0" stroke="#777" strokeWidth=".8" />
              <circle cx="18" cy="17" r="3.500" fill="#8ea2ba" stroke="#eee" />
            </svg>
          </button>
          <button type="button" aria-label="Firefox">
            <svg width="22" height="24" viewBox="0 0 22 24" aria-hidden="true">
              <circle cx="11" cy="12" r="10.500" fill="#ff7a1a" />
              <path d="M13 2c7 3 9 9 8 13-2 6-9 9-14 6C14 21 18 15 13 2z" fill="#ffcf2e" />
              <circle cx="11" cy="11" r="6.500" fill="#2b64c9" />
              <path d="M1 6c2 0 3-1 4-3 1 2 3 2 5 3-1 3-3 3-3 6 1 3 5 3 7 1 0 5-5 7-9 5-5-2-5-8-4-12z" fill="#ff5a1c" />
              <path d="M4 17c3 4 10 5 14 0-2 6-11 8-14 0z" fill="#e0342e" />
            </svg>
          </button>
          <button type="button" aria-label="Notes">
            <svg width="22" height="24" viewBox="0 0 22 24" aria-hidden="true">
              <path d="M1.500 3.500h19v17h-19z" fill="#f6e04a" stroke="#a88c00" />
              <path d="M1.500 17.500h19v3h-19z" fill="#d6b400" stroke="#a88c00" />
              <path d="M6 15.500h9" stroke="#333" strokeWidth="1.300" />
              <path d="M8 14l2-4L20 1l2 2L12 12z" fill="#c9b28a" stroke="#4a3b20" />
            </svg>
          </button>
        </div>
        <div className="ml-auto flex items-center">
          <span className="mr-[6px]"><DotGrip /></span>
          <svg width="22" height="20" viewBox="0 0 22 20" aria-hidden="true">
            <path d="M10 5c0-4 3 0 6-1s3-2 4-3" stroke="#6f9bd0" strokeWidth="1.500" fill="none" />
            <path d="M4 6.500h17l-2 8H2z" fill="#dedede" stroke="#8a8a8a" />
            <path d="M5 9h14M5 12h13" stroke="#999" strokeDasharray="1.500 1" />
            <circle cx="5" cy="14.500" r="4.500" fill="#3e6fc0" stroke="#274a86" />
            <path d="M2 13c2-3 5-2 6 0-2 3-3 5-4 4z" fill="#8fc83e" />
          </svg>
          <svg width="18" height="20" viewBox="0 0 18 20" className="ml-[11px]" aria-hidden="true">
            <path d="M1.500 7.500h3v6h-3zM4.500 7.500l5-5.500v16l-5-4.500z" fill="#a9ada6" stroke="#4a4f48" />
            <path d="M13 7c1.500 2 1.500 4 0 6M15 8c1 1 1 3 0 4" stroke="#6f9bd0" strokeWidth="1.200" fill="none" />
          </svg>
          <time className="ml-[38px]">Wed Mar 31, 12:37 PM</time>
          <span className="ml-5 font-bold">student</span>
        </div>
      </header>
      <div className="h-[5px] shrink-0 bg-[#f2f6fc]" />

      {/* title bar */}
      <div className="flex h-[21px] shrink-0 items-center border-t border-b border-t-[#777] border-b-black bg-gradient-to-b from-[#3a3a3a] to-[#141414] px-2 pb-1 font-['DejaVu_Sans',sans-serif] text-[13px] font-bold text-white">
        <MiniWindow />
        <h1 className="flex-1 text-center leading-4">Innovus(TM) Implementation System 17.13 - /home/student/Desktop/17BEC10971 - core</h1>
        <div className="flex gap-[14px]">
          {["M1 8h8v1.500H1z", "M2 2.500h6v5H2zM3.500 4v2h3V4z", "M1 1h2l2 2.500L7 1h2v1L6.500 5 9 8v1H7L5 6.500 3 9H1V8l2.500-3L1 2z"].map((d, i) => (
            <button key={i} type="button" aria-label={["Minimize", "Maximize", "Close"][i]}>
              <svg width="10" height="10" viewBox="0 0 10 10" aria-hidden="true">
                <path d={d} fill="#ddd" fillRule="evenodd" />
              </svg>
            </button>
          ))}
        </div>
      </div>

      {/* menu bar */}
      <div className="flex h-[27px] shrink-0 items-center bg-[#f2f2f2] pr-[6px] pl-[9px]">
        <nav className="flex gap-3">
          {menus.map(([text, at]) => (
            <button key={text} type="button">
              <Mnemonic text={text} at={at} />
            </button>
          ))}
        </nav>
        <label className="ml-auto flex h-[22px] w-[125px] items-center rounded-sm border border-[#c8c8c8] border-t-[#888] bg-white">
          <svg width="13" height="14" viewBox="0 0 13 14" className="shrink-0" aria-hidden="true">
            <circle cx="5" cy="5" r="4" fill="#eef3fb" stroke="#9a6b5e" strokeWidth="1.300" />
            <path d="M8 8l4 5" stroke="#444a80" strokeWidth="2.200" />
          </svg>
          <input type="text" placeholder="online help" aria-label="Online help" className="ml-[10px] w-full min-w-0 bg-transparent outline-none placeholder:text-[#8a8a8a]" />
        </label>
        <span className="relative ml-[5px] text-lg leading-6 font-bold text-[#2b2b2b]">
          cadence
          <span className="absolute top-px left-[10px] h-[2px] w-[7px] bg-[#e03030]" />
        </span>
      </div>
      <div className="h-1 shrink-0 bg-[#cc0000]" />

      {/* tabs */}
      <div className="flex h-7 shrink-0 items-end border-b-2 border-white">
        <button type="button" className="h-[22px] rounded-tr-sm border-t border-r border-[#aaa] pt-[2px] pr-[9px] pl-[10px]">
          <Mnemonic text="Layout" at={0} />
        </button>
        <button type="button" aria-label="New tab" className="flex h-[21px] w-[22px] items-center justify-center rounded border border-[#bbb] bg-gradient-to-b from-white to-[#b8b8b8]">
          <svg width="16" height="16" viewBox="0 0 16 16" aria-hidden="true">
            <circle cx="8" cy="8" r="7" fill="#c45a5a" />
            <path d="M8 4.500v7M4.500 8h7" stroke="#fff" strokeWidth="2" />
          </svg>
        </button>
      </div>

      {/* toolbars */}
      <div className="flex h-[31px] shrink-0 pl-[2px]">
        <Group items={["open", "save", "gear", "prefs"]} />
        <Group items={["undo", "redo", "|", "brushSel", "v", "brushX", "v", "brushXX", "brushCurX"]} />
        <Group items={["zoomFit", "zoomIn", "zoomOut", "zoomSel", "zoomPrev", "v", "refresh", "|", "hierDown", "hierUp"]} />
        <Group items={["panels", "orgTree", "warn", "info", "curXX", "rulerDel", "warnBrush"]} />
        <Group grow items={["report", "notepad", "percentBall"]} />
      </div>
      <div className="flex h-[30px] shrink-0 pl-[2px]">
        <Group
          grow
          items={[
            "!select", "V", "snow", "v", "copy", "ruler", "v", "tilesV", "percent", "blockAdd", "blockAdd", "nodeAdd",
            "wire", "boxCursor", "shapeL", "cut", "v", "stretch", "v", "polyCursor", "wireCursor", "swapCursor",
          ]}
        />
        <div className="flex items-center border-b border-[#8a8a8a] bg-gradient-to-b from-[#ececec] to-[#b9b9b9] pr-[5px]">
          {["|", "tiles", "amoeba", "!chip"].map(renderItem)}
        </div>
      </div>

      {/* workspace */}
      <main className="flex min-h-0 flex-1 pl-[2px]">
        <div className="flex w-[41px] shrink-0 flex-col rounded-b-sm border-b border-[#999] bg-gradient-to-r from-[#ececec] to-[#b9b9b9]">
          <span className="mx-1 mt-1 h-[5px] shrink-0 border-y border-[#888] bg-[linear-gradient(#e8e8e8_1px,#888_1px,#888_2px,#e8e8e8_2px)]" />
          {sideTools.map(([name, drop]) => (
            <div key={name} className={drop ? "flex h-[30px] shrink-0 items-start" : "flex h-[30px] shrink-0 items-start justify-center pr-[2px]"}>
              <Tool name={name.replace("!", "")} pressed={name.startsWith("!")} />
              {drop && <Drop pressed={drop === "V"} faded={drop === "-"} />}
            </div>
          ))}
        </div>

        <section className="relative flex min-w-0 flex-1 items-center justify-center overflow-hidden bg-black" aria-label="Layout view">
          <CorePlan />
          <button type="button" aria-label="Views" className="absolute top-0 right-0 border border-[#d8d8d8] bg-[#f4f4f4]">
            <svg width="21" height="22" viewBox="0 0 21 22" aria-hidden="true">
              <path d="M2 2h6v6H2z" fill="#c04848" />
              <path d="M13 2h6v6h-6z" fill="#3c9a3c" />
              <path d="M2 12h6v6H2z" fill="#e39a34" />
              <path d="M13 12h6v6h-6z" fill="#4f6fb5" />
              <path d="M4 4h2v2H4zM15 4h2v2h-2zM4 14h2v2H4zM15 14h2v2h-2z" fill="#fff" opacity=".5" />
            </svg>
          </button>
          <svg width="12" height="12" viewBox="0 0 12 12" className="absolute right-[2px] bottom-[2px]" aria-hidden="true">
            <path d="M0 0h10L7.500 3 12 8.500 9 12 3.500 7 0 10z" fill="#86cc28" />
          </svg>
        </section>
        <div className="w-[6px] shrink-0 border-r border-[#eee] bg-[#cfcfd6]" />

        <aside className="mr-px flex w-[206px] shrink-0 flex-col border-r border-white">
          <button type="button" className="ml-px h-[21px] w-[80px] rounded-[10px] border border-[#999] bg-gradient-to-b from-[#fafafa] to-[#cfcfcf] text-[13px] leading-[18px]">All Colors</button>
          <div className="mt-[2px] mr-[3px] ml-[2px] flex min-h-0 flex-1 border-t-[3px] border-l-2 border-[#1a1a1a]">
            <div className="min-w-0 flex-1 overflow-hidden bg-white">
              <table className="w-full table-fixed border-collapse" role="treegrid">
                <colgroup>
                  <col />
                  <col className="w-4" />
                  <col className="w-4" />
                  <col className="w-4" />
                </colgroup>
                <thead>
                  <tr className="h-[19px] bg-gradient-to-b from-[#bcbcbc] to-[#9c9c9c]">
                    <th className="p-0" />
                    <th className="p-0" />
                    <th className="p-0 pr-1 font-normal leading-[19px]">V</th>
                    <th className="p-0 pr-1 font-normal leading-[19px]">S</th>
                  </tr>
                </thead>
                <tbody>
                  {rows.map((r, i) => (
                    <tr key={r.name + i} className="h-[17px]">
                      <td className="p-0">
                        <span className="flex h-[17px] items-center whitespace-nowrap leading-[17px]">
                          <Rails row={r} first={i === 0} />
                          {r.radio === "tiny" ? <span className="ml-[3px] flex"><Radio kind="tiny" /></span> : r.radio && <Radio kind={r.radio} />}
                          <span className={r.level === 0 ? "ml-[2px] text-[13px] font-bold" : r.radio === "tiny" ? "" : "ml-[2px]"}>{r.name}</span>
                        </span>
                      </td>
                      <td className="p-0">{r.swatch && <Swatch kind={r.swatch} />}</td>
                      <td className="p-0 pl-px"><Tick mark={r.v} label={`${r.name} visible`} /></td>
                      <td className="p-0 pl-px"><Tick mark={r.s} label={`${r.name} selectable`} /></td>
                    </tr>
                  ))}
                </tbody>
              </table>
            </div>
            <div className="flex w-4 shrink-0 flex-col bg-[#8f8f8f]">
              <button type="button" aria-label="Scroll up" className="flex h-[15px] items-center justify-center border-b border-[#888] bg-[#d0d0d0]">
                <svg width="10" height="8" viewBox="0 0 10 8" aria-hidden="true"><path d="M5 .5L9.500 7.500H.5z" fill="#eee" stroke="#999" /></svg>
              </button>
              <div className="flex min-h-0 flex-1 flex-col">
                <div className="flex h-[70%] items-center justify-center rounded-lg border border-[#777] bg-gradient-to-r from-[#c4c4c4] to-[#ababab]">
                  <span className="h-[9px] w-[6px] bg-[linear-gradient(#777_1px,transparent_1px)] bg-[size:6px_2px]" />
                </div>
              </div>
              <button type="button" aria-label="Scroll down" className="flex h-[15px] items-center justify-center border-t border-[#eee] bg-[#c4c4c4]">
                <svg width="10" height="8" viewBox="0 0 10 8" aria-hidden="true"><path d="M5 7.500L9.500 .5H.5z" fill="#eee" stroke="#999" /></svg>
              </button>
            </div>
          </div>
          <div className="flex h-[43px] shrink-0 items-center justify-between border-t border-white pt-[2px] pr-[9px] pl-[3px]">
            <label htmlFor="detail">Detail</label>
            <span className="flex w-[107px] flex-col">
              <input
                id="detail"
                type="range"
                defaultValue={0}
                className="mt-1 h-[14px] w-full appearance-none bg-[linear-gradient(#aaa,#aaa)] bg-[size:100%_1px] bg-center bg-no-repeat [&::-webkit-slider-thumb]:h-[14px] [&::-webkit-slider-thumb]:w-[9px] [&::-webkit-slider-thumb]:appearance-none [&::-webkit-slider-thumb]:rounded-[3px] [&::-webkit-slider-thumb]:border [&::-webkit-slider-thumb]:border-[#888] [&::-webkit-slider-thumb]:bg-[linear-gradient(90deg,#eee_2px,#c00000_2px,#c00000_5px,#eee_5px)]"
              />
              <span className="mt-px flex justify-center gap-[23px]">
                <span className="h-[5px] w-px bg-[#aaa]" />
                <span className="h-[5px] w-px bg-[#aaa]" />
                <span className="h-[5px] w-px bg-[#aaa]" />
              </span>
            </span>
            <span>Speed</span>
          </div>
        </aside>
        <div className="w-px shrink-0 bg-[#222]" />
      </main>

      {/* status bar */}
      <footer className="flex h-[23px] shrink-0 gap-1 bg-[#efefef] pt-[2px] pr-[6px] pl-[2px]">
        <button type="button" className="w-6 border border-r-2 border-b-0 border-[#555] bg-white pt-[2px] text-[13px] leading-4 font-bold">Q</button>
        <button type="button" aria-label="History" className="flex w-6 items-center justify-center border border-r-2 border-b-0 border-[#555] bg-white">
          <svg width="20" height="18" viewBox="0 0 20 18" aria-hidden="true">
            <path d="M1 1h5v4H1z" fill="#e06060" />
            <path d="M1 7h5v4H1z" fill="#5f7fc0" />
            <path d="M1 13h5v4H1z" fill="#f0a060" />
            <circle cx="12" cy="9" r="5.500" fill="#eef2fa" stroke="#55658a" strokeWidth="1.800" />
            <path d="M12 6v3h3" stroke="#333" fill="none" />
            <path d="M14 13h6l-3 4z" fill="#000" />
          </svg>
        </button>
        <div className="flex flex-1 items-center border border-b-0 border-[#555] bg-white px-[5px] pt-[3px] leading-4">
          <p>Click to select single object. Shift+Click to de/select multiple objects.</p>
          <span className="ml-auto font-bold text-[#3a66dd]">0</span>
          <span className="ml-7 text-[13px] font-bold text-[#666]">-50.48800, 4.40900</span>
          <span className="ml-5 font-bold text-[#4fc0c8]">In Memory</span>
        </div>
      </footer>
      <div className="h-2 shrink-0 bg-[#f2f6fc]" />

      {/* taskbar */}
      <div className="flex h-6 shrink-0 items-center border-b-2 border-[#444] bg-[#edeceb] pr-[2px] pl-[4px] font-['DejaVu_Sans',sans-serif] text-[13px]">
        <span className="mr-[3px]"><DotGrip /></span>
        <div className="flex gap-[2px]">
          <button type="button" className="flex h-[21px] w-[199px] items-center gap-2 rounded-t border border-b-0 border-[#8e8a86] bg-gradient-to-b from-[#fafafa] to-[#e0dfdd] px-[6px]">
            <svg width="16" height="15" viewBox="0 0 16 15" aria-hidden="true">
              <path d="M.5 1.500h7l1 2h7v11H.5z" fill="#b6cfea" stroke="#7fa3cc" />
            </svg>
            [17BEC10971]
          </button>
          <button type="button" className="flex h-[21px] w-[199px] items-center gap-2 rounded-t border border-b-0 border-[#8e8a86] bg-gradient-to-b from-[#fafafa] to-[#e0dfdd] px-[6px]">
            <svg width="16" height="15" viewBox="0 0 16 15" aria-hidden="true">
              <path d="M.5 .5h15v14H.5z" fill="#bbb" stroke="#777" />
              <path d="M2 2h12v11H2z" fill="#2c322e" />
              <path d="M4 4l3 2.500L4 9M8 10h4" stroke="#fff" fill="none" />
            </svg>
            student@cad54:17BEC...
          </button>
          <button type="button" className="flex h-[21px] w-[199px] items-center gap-[10px] rounded-t border border-b-0 border-[#8e8a86] bg-[#c4c0bc] px-[7px]">
            <MiniWindow />
            Innovus(TM) Impleme...
          </button>
        </div>
        <div className="ml-auto flex h-5 w-[72px] rounded-t border border-b-0 border-[#8e8a86]">
          <button type="button" aria-label="Workspace 1" className="flex flex-1 items-center justify-center bg-[#cfe0f7]"><MiniWindow /></button>
          <button type="button" aria-label="Workspace 2" className="flex-1 bg-[#aba6a2]" />
        </div>
        <button type="button" aria-label="Trash" className="ml-3">
          <svg width="22" height="20" viewBox="0 0 22 20" aria-hidden="true">
            <path d="M3 5l2-4 4 1 4-2 5 3 1 3z" fill="#e8e8e8" stroke="#888" />
            <path d="M2.500 5.500h17l-1 14h-15z" fill="#2f6db8" stroke="#1d4a85" />
            <path d="M5 8h12v9H6z" fill="#5b94d6" />
          </svg>
        </button>
      </div>
    </div>
  );
}
